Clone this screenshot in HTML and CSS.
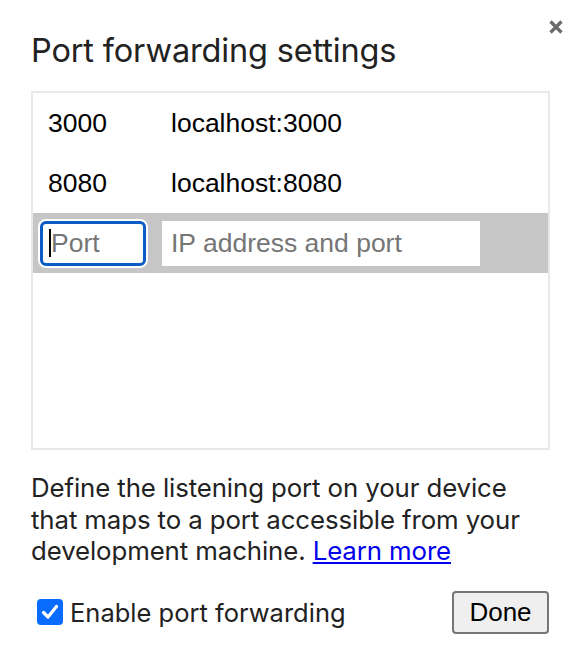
FILE: index.html
```html
<!DOCTYPE html>
<html>
<head>
<meta charset="utf-8">
<link rel="stylesheet" href="styles.css">
</head>
<body>
<div class="dialog">
  <button class="close" aria-label="Close">
    <svg width="16" height="16" viewBox="0 0 16 16"><path d="M2.5 2.5 L13.5 13.5 M13.5 2.5 L2.5 13.5" stroke="#6b6b6b" stroke-width="3.2" stroke-linecap="butt"/></svg>
  </button>
  <h1 class="title">Port forwarding settings</h1>
  <div class="list">
    <div class="row"><span class="port">3000</span><span class="addr">localhost:3000</span></div>
    <div class="row"><span class="port">8080</span><span class="addr">localhost:8080</span></div>
    <div class="row edit">
      <div class="inp port-inp"><span class="caret"></span>Port</div>
      <div class="inp addr-inp">IP address and port</div>
    </div>
  </div>
  <p class="desc">Define the listening port on your device that maps to a port accessible from your development machine. <a href="#">Learn more</a></p>
  <div class="footer">
    <label class="check"><span class="box"><svg width="18" height="16" viewBox="0 0 18 16"><path d="M2.5 8.5 L7 13 L15.5 2.5" fill="none" stroke="#fff" stroke-width="3.2" stroke-linecap="round" stroke-linejoin="round"/></svg></span>Enable port forwarding</label>
    <button class="done">Done</button>
  </div>
</div>
</body>
</html>
```
FILE: styles.css
```css
html, body { margin: 0; padding: 0; background: #fff; }
.dialog {
  position: relative;
  width: 586px;
  height: 662px;
  box-sizing: border-box;
  padding: 30px 36px 0 31px;
  font-family: "Inter", "Liberation Sans", sans-serif;
  color: #222;
}
.close {
  position: absolute;
  top: 19px;
  left: 548px;
  width: 16px;
  height: 16px;
  padding: 0;
  border: 0;
  background: none;
  filter: blur(0.4px);
}
.close svg { display: block; }
.title {
  margin: 0;
  font-weight: 400;
  font-size: 32.5px;
  line-height: 42px;
  letter-spacing: -0.15px;
  color: #222;
}
.list {
  margin-top: 19px;
  width: 519px;
  height: 359px;
  box-sizing: border-box;
  border: 2px solid #e8e8e8;
  font-family: "Liberation Sans", Arial, sans-serif;
  font-size: 26.5px;
  color: #000;
}
.row {
  display: flex;
  align-items: center;
  height: 60px;
  padding-left: 15px;
}
.row .port { width: 123px; }
.row.edit {
  background: #c6c6c6;
  padding-left: 7px;
}
.inp {
  box-sizing: border-box;
  height: 45px;
  background: #fff;
  color: #757575;
  display: flex;
  align-items: center;
}
.port-inp {
  width: 106px;
  border: 3px solid #0a5bc4;
  border-radius: 6px;
  box-shadow: 0 0 0 2px #fff;
  padding-left: 6px;
}
.caret {
  display: inline-block;
  width: 2px;
  height: 28px;
  background: #000;
  margin-right: 0;
}
.addr-inp {
  margin-left: 16px;
  width: 318px;
  padding-left: 9px;
}
.desc {
  margin: 22px 0 0;
  font-size: 25.8px;
  line-height: 31.5px;
  letter-spacing: -0.1px;
  color: #222;
}
.desc a { color: #0000ee; text-decoration: underline; text-underline-offset: 2px; }
.footer {
  display: flex;
  align-items: center;
  justify-content: space-between;
  margin-top: 24px;
}
.check {
  display: flex;
  align-items: center;
  font-size: 25.5px;
  color: #222;
  padding-left: 6px;
}
.box {
  width: 26px;
  height: 26px;
  border-radius: 4px;
  background: #0a6cff;
  display: flex;
  align-items: center;
  justify-content: center;
  margin-right: 7px;
}
.box svg { display: block; }
.done {
  width: 97px;
  height: 43px;
  border: 2px solid #767676;
  border-radius: 4px;
  background: #efefef;
  font-family: "Liberation Sans", Arial, sans-serif;
  font-size: 26px;
  color: #000;
  padding: 0;
  margin-right: 1px;
}
```
